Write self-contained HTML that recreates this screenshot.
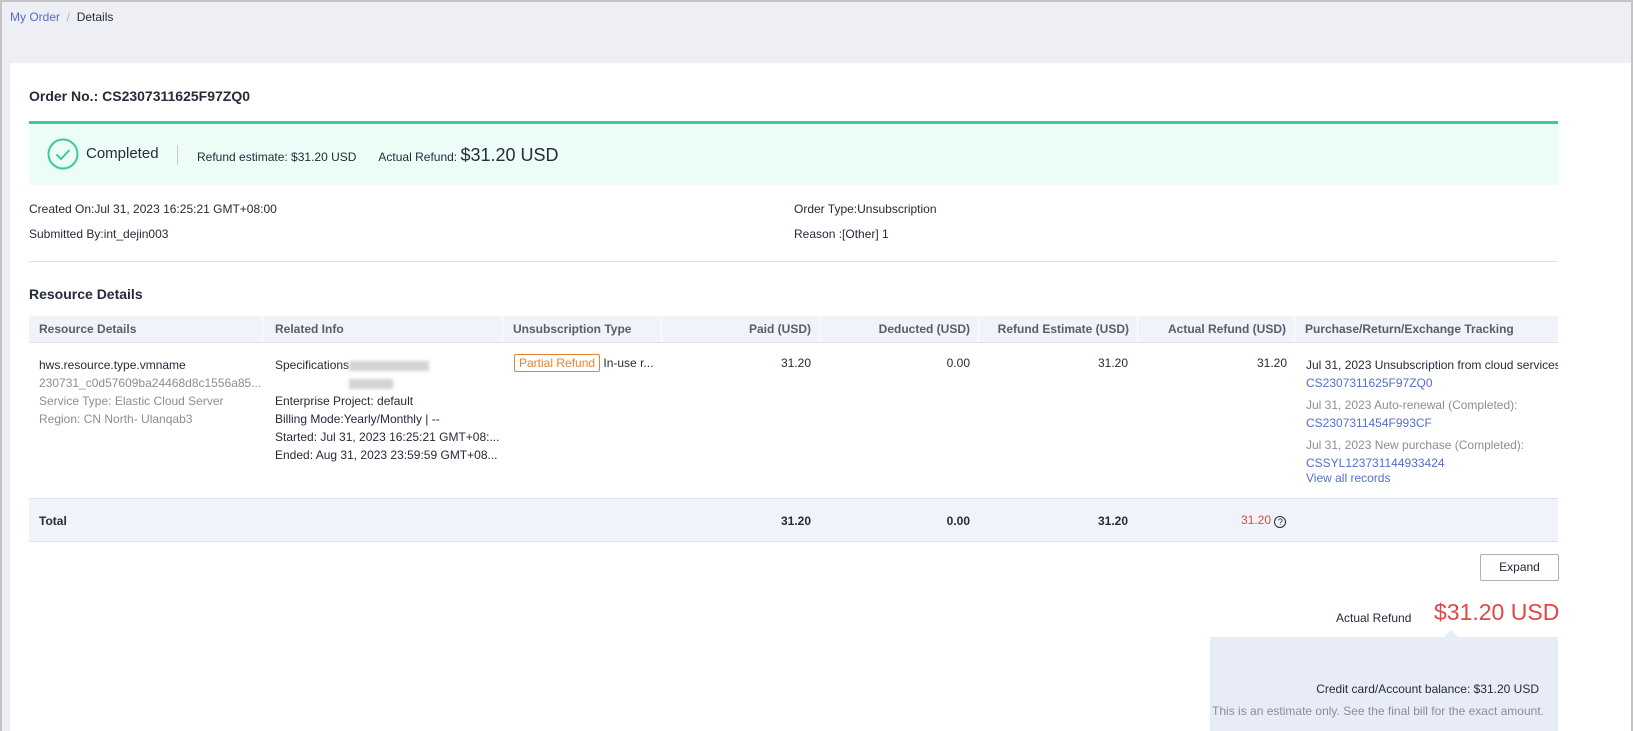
<!DOCTYPE html>
<html><head><meta charset="utf-8"><style>
*{box-sizing:border-box;margin:0;padding:0}
body{width:1633px;height:731px;overflow:hidden;font-family:"Liberation Sans",sans-serif;font-size:12px;color:#252b3a;background:#fff}
.frame{position:absolute;left:0;top:0;width:1633px;height:731px;background:#eeeff4;overflow:hidden}
.a{position:absolute;white-space:nowrap}
.blue{color:#526ecc}
.grey{color:#8a8e99}
.hd{position:absolute;top:316px;height:27px;background:#f0f3fa;border-bottom:1px solid #dfe1e6;left:29px;width:1529px}
.hd div{position:absolute;top:0;height:26px;line-height:26px;font-weight:bold;color:#575d6c;border-right:1px solid #fff}
.r{text-align:right}
</style></head><body>
<div class="frame"></div>
<div class="a blue" style="left:10px;top:10px">My Order <span style="color:#adb0b8">&nbsp;/&nbsp;</span> <span style="color:#252b3a">Details</span></div>
<div class="a" style="left:10px;top:63px;width:1621px;height:668px;background:#fff"></div>
<div class="a" style="left:29px;top:88px;font-size:14px;font-weight:bold">Order No.: CS2307311625F97ZQ0</div>
<div class="a" style="left:29px;top:121px;width:1529px;height:64px;background:#ebfdf6;border-top:3px solid #3dc8a0"></div>
<svg class="a" style="left:47px;top:138px" width="32" height="32" viewBox="0 0 32 32"><circle cx="16" cy="16" r="14.5" fill="none" stroke="#3dc8a0" stroke-width="2"/><path d="M9.5 16.5l4.5 4.5 8.5-9" fill="none" stroke="#3dc8a0" stroke-width="2"/></svg>
<div class="a" style="left:86px;top:145px;font-size:15px;line-height:18px">Completed</div>
<div class="a" style="left:177px;top:145px;width:1px;height:20px;background:#c8cad0"></div>
<div class="a" style="left:197px;top:140px;height:30px;display:flex;align-items:baseline;line-height:30px"><span>Refund estimate: $31.20 USD</span><span style="margin-left:22px">Actual Refund:&nbsp;</span><span style="font-size:18px">$31.20 USD</span></div>
<div class="a" style="left:29px;top:202px">Created On:Jul 31, 2023 16:25:21 GMT+08:00</div>
<div class="a" style="left:29px;top:227px">Submitted By:int_dejin003</div>
<div class="a" style="left:794px;top:202px">Order Type:Unsubscription</div>
<div class="a" style="left:794px;top:227px">Reason :[Other] 1</div>
<div class="a" style="left:29px;top:261px;width:1529px;height:1px;background:#dfe1e6"></div>
<div class="a" style="left:29px;top:286px;font-size:14px;font-weight:bold">Resource Details</div>
<div class="hd">
<div style="left:0;width:234px;padding-left:10px">Resource Details</div>
<div style="left:234px;width:240px;padding-left:12px">Related Info</div>
<div style="left:474px;width:159px;padding-left:10px">Unsubscription Type</div>
<div class="r" style="left:633px;width:158px;padding-right:8px">Paid (USD)</div>
<div class="r" style="left:791px;width:159px;padding-right:8px">Deducted (USD)</div>
<div class="r" style="left:950px;width:159px;padding-right:8px">Refund Estimate (USD)</div>
<div class="r" style="left:1109px;width:157px;padding-right:8px">Actual Refund (USD)</div>
<div style="left:1266px;width:263px;padding-left:10px;border:none">Purchase/Return/Exchange Tracking</div>
</div>
<div class="a" style="left:39px;top:356px;line-height:18px">hws.resource.type.vmname<br><span class="grey">230731_c0d57609ba24468d8c1556a85...<br>Service Type: Elastic Cloud Server<br>Region: CN North- Ulanqab3</span></div>
<div class="a" style="left:275px;top:356px;line-height:18px">Specifications<span style="display:inline-block;width:80px;height:10px;background:#d4d4d8;filter:blur(1.5px);vertical-align:middle"></span><br><span style="display:inline-block;margin-left:74px;width:44px;height:10px;background:#d4d4d8;filter:blur(1.5px);vertical-align:middle"></span><br>Enterprise Project: default<br>Billing Mode:Yearly/Monthly | --<br>Started: Jul 31, 2023 16:25:21 GMT+08:...<br>Ended: Aug 31, 2023 23:59:59 GMT+08...</div>
<div class="a" style="left:514px;top:354px"><span style="display:inline-block;border:1px solid #e6832e;color:#e6832e;border-radius:2px;padding:1px 4px">Partial Refund</span> In-use r...</div>
<div class="a r" style="left:662px;width:149px;top:356px">31.20</div>
<div class="a r" style="left:820px;width:150px;top:356px">0.00</div>
<div class="a r" style="left:979px;width:149px;top:356px">31.20</div>
<div class="a r" style="left:1138px;width:149px;top:356px">31.20</div>
<div class="a" style="left:1306px;top:356px;line-height:18px">Jul 31, 2023 Unsubscription from cloud services (C<br><span class="blue">CS2307311625F97ZQ0</span></div>
<div class="a" style="left:1306px;top:396px;line-height:18px"><span class="grey">Jul 31, 2023 Auto-renewal (Completed):</span><br><span class="blue">CS2307311454F993CF</span></div>
<div class="a" style="left:1306px;top:436px;line-height:18px"><span class="grey">Jul 31, 2023 New purchase (Completed):</span><br><span class="blue">CSSYL123731144933424</span></div>
<div class="a blue" style="left:1306px;top:471px">View all records</div>
<div class="a" style="left:1558px;top:300px;width:75px;height:431px;background:#fff"></div>
<div class="a" style="left:29px;top:498px;width:1529px;height:44px;background:#f0f3fa;border-top:1px solid #dfe1e6;border-bottom:1px solid #dfe1e6"></div>
<div class="a" style="left:39px;top:514px;font-weight:bold">Total</div>
<div class="a r" style="left:662px;width:149px;top:514px;font-weight:bold">31.20</div>
<div class="a r" style="left:820px;width:150px;top:514px;font-weight:bold">0.00</div>
<div class="a r" style="left:979px;width:149px;top:514px;font-weight:bold">31.20</div>
<div class="a" style="left:1241px;top:513px;color:#e54545">31.20 <span style="display:inline-block;width:12px;height:12px;border:1px solid #252b3a;border-radius:50%;font-size:9px;line-height:10px;text-align:center;color:#252b3a;vertical-align:-1px">?</span></div>
<div class="a" style="left:1480px;top:554px;width:79px;height:27px;border:1px solid #adb0b8;border-radius:2px;text-align:center;line-height:25px">Expand</div>
<div class="a" style="left:1336px;top:611px">Actual Refund</div>
<div class="a" style="left:1434px;top:599px;font-size:23px;color:#e54545">$31.20 USD</div>
<div class="a" style="left:1210px;top:637px;width:348px;height:94px;background:#e8ecf6"></div>
<div class="a" style="left:1444px;top:630px;width:0;height:0;border-left:7px solid transparent;border-right:7px solid transparent;border-bottom:7px solid #e8ecf6"></div>
<div class="a r" style="left:1210px;width:329px;top:682px">Credit card/Account balance: $31.20 USD</div>
<div class="a r grey" style="left:1210px;width:334px;top:704px">This is an estimate only. See the final bill for the exact amount.</div>
<div class="a" style="left:1631px;top:0;width:2px;height:731px;background:#c4c4c6"></div>
<div class="a" style="left:0;top:0;width:2px;height:731px;background:#c4c4c6"></div>
<div class="a" style="left:0;top:0;width:1633px;height:2px;background:#c4c4c6"></div>
</body></html>
